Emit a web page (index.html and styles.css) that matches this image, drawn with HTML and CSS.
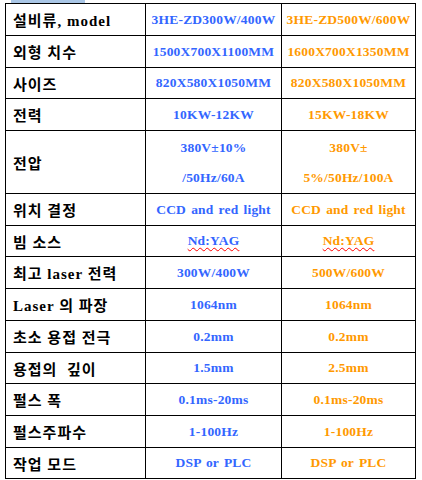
FILE: index.html
```html
<!DOCTYPE html>
<html lang="ko">
<head>
<meta charset="utf-8">
<link rel="stylesheet" href="styles.css">
</head>
<body>
<div class="topbar"></div>
<div class="spec">
  <div class="lbl">설비류, model</div><div class="v b">3HE-ZD300W/400W</div><div class="v o">3HE-ZD500W/600W</div>
  <div class="lbl">외형 치수</div><div class="v b">1500X700X1100MM</div><div class="v o">1600X700X1350MM</div>
  <div class="lbl">사이즈</div><div class="v b">820X580X1050MM</div><div class="v o">820X580X1050MM</div>
  <div class="lbl">전력</div><div class="v b">10KW-12KW</div><div class="v o">15KW-18KW</div>
  <div class="lbl">전압</div><div class="v b two"><span>380V±10%</span><span>/50Hz/60A</span></div><div class="v o two"><span>380V±</span><span>5%/50Hz/100A</span></div>
  <div class="lbl">위치 결정</div><div class="v b">CCD and red light</div><div class="v o">CCD and red light</div>
  <div class="lbl">빔 소스</div><div class="v b"><span class="spell">Nd:YAG</span></div><div class="v o"><span class="spell">Nd:YAG</span></div>
  <div class="lbl">최고 laser 전력</div><div class="v b">300W/400W</div><div class="v o">500W/600W</div>
  <div class="lbl">Laser 의 파장</div><div class="v b">1064nm</div><div class="v o">1064nm</div>
  <div class="lbl">초소 용접 전극</div><div class="v b">0.2mm</div><div class="v o">0.2mm</div>
  <div class="lbl">용접의&nbsp;&nbsp;깊이</div><div class="v b">1.5mm</div><div class="v o">2.5mm</div>
  <div class="lbl">펄스 폭</div><div class="v b">0.1ms-20ms</div><div class="v o">0.1ms-20ms</div>
  <div class="lbl">펄스주파수</div><div class="v b">1-100Hz</div><div class="v o">1-100Hz</div>
  <div class="lbl">작업 모드</div><div class="v b">DSP or PLC</div><div class="v o">DSP or PLC</div>
</div>
</body>
</html>
```

FILE: styles.css
```css
html, body {
  margin: 0;
  padding: 0;
  background: #ffffff;
}
.topbar {
  margin-left: 11px;
  width: 74px;
  height: 3px;
  background: #a9c6e6;
}
.spec {
  margin-left: 5px;
  width: 411px;
  box-sizing: border-box;
  display: grid;
  grid-template-columns: 139px 135px 133px;
  grid-template-rows: 31px 31px 30px 31px 62px 31px 30px 31px 31px 31px 30px 31px 31px 30px;
  gap: 1px;
  padding: 1px;
  background: #000000;
}
.spec > div {
  background: #ffffff;
  display: flex;
  align-items: center;
}
.lbl {
  padding-left: 7px;
  font-family: "Liberation Serif", "Noto Sans CJK KR", serif;
  font-weight: bold;
  font-size: 15px;
  letter-spacing: 1px;
  color: #000000;
  white-space: pre;
}
.v {
  justify-content: center;
  font-family: "Liberation Serif", "Noto Sans CJK KR", serif;
  font-weight: bold;
  font-size: 13.5px;
  letter-spacing: 0.2px;
  word-spacing: 1.5px;
  white-space: nowrap;
}
.v.two {
  flex-direction: column;
  justify-content: space-around;
  padding: 2px 0 0;
}
.b { color: #3366ff; }
.o { color: #ff9900; }
.spell {
  text-decoration: underline wavy #ff0000 1px;
  text-underline-offset: 2px;
}
```
